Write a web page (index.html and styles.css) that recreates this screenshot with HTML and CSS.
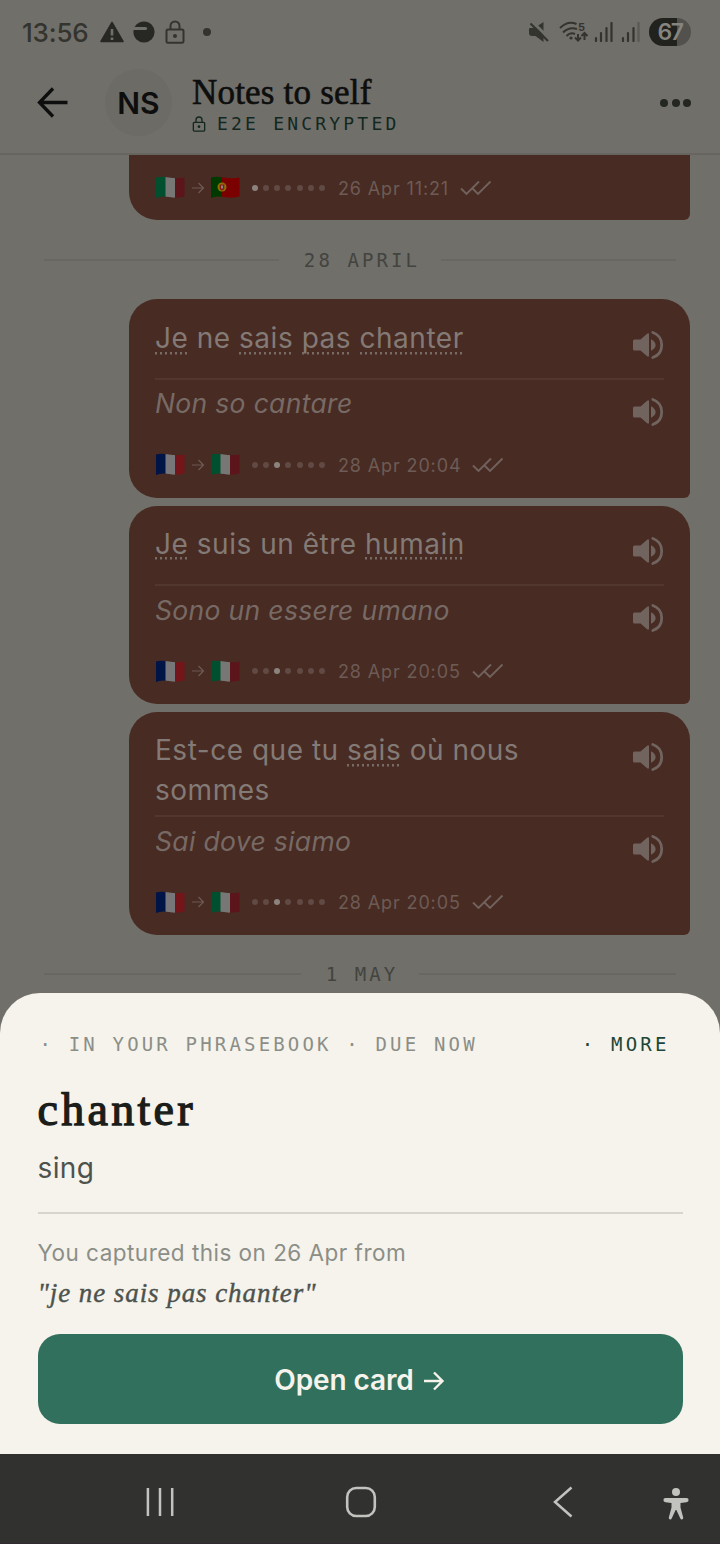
FILE: index.html
```html
<!DOCTYPE html>
<html lang="en">
<head>
<meta charset="utf-8">
<title>Notes to self</title>
<link rel="stylesheet" href="styles.css">
</head>
<body>
<svg class="defs" width="0" height="0">
  <symbol id="speaker" viewBox="0 0 32 32">
    <path d="M2.500 10.500h6L15.100 4.700q1.900-1.200 1.900.7v21.200q0 1.900-1.900.7L8.500 21.500h-6q-1.500 0-1.500-1.500v-8q0-1.500 1.500-1.500z" fill="currentColor"/>
    <path d="M19 10.200q4.600 2.400 4.600 5.800T19 21.800z" fill="currentColor"/>
    <path d="M20.800 3.500C26.700 5.500 29.700 10.500 29.700 16S26.700 26.500 20.800 28.500" fill="none" stroke="currentColor" stroke-width="2.800" stroke-linecap="round"/>
  </symbol>
  <symbol id="checks" viewBox="0 0 32 16">
    <path d="M1 8.500l5.500 5.500L19 1.500M12.500 8.500l5.500 5.500L30.500 1.500" fill="none" stroke="currentColor" stroke-width="1.900"/>
  </symbol>
  <symbol id="arrow" viewBox="0 0 14 14">
    <path d="M1 7h11M7.500 2l5 5-5 5" fill="none" stroke="currentColor" stroke-width="1.200"/>
  </symbol>
  <clipPath id="wave"><path d="M1 1.500Q6 0 14 1.500T29.500 1.500V20.500Q22 22.500 14 21T1 22z"/></clipPath>
  <symbol id="it" viewBox="0 0 30 23"><g clip-path="url(#wave)"><path fill="#00502f" d="M0 0h11v23H0z"/><path fill="#777775" d="M10.500 0H20v23h-9.500z"/><path fill="#5b151b" d="M20 0h10v23H20z"/></g></symbol>
  <symbol id="fr" viewBox="0 0 30 23"><g clip-path="url(#wave)"><path fill="#001448" d="M0 0h11v23H0z"/><path fill="#777779" d="M10.500 0H20v23h-9.500z"/><path fill="#74151a" d="M20 0h10v23H20z"/></g></symbol>
  <symbol id="pt" viewBox="0 0 30 23"><g clip-path="url(#wave)"><path fill="#003a00" d="M0 0h12v23H0z"/><path fill="#7b0000" d="M11.500 0H30v23H11.500z"/></g><circle cx="12" cy="11" r="4.500" fill="#8b7200"/><path d="M9.700 8.500h4.600v3.500q0 2-2.300 2.500-2.300-.5-2.300-2.500z" fill="#881818"/><path d="M11 9.500h2v3h-2z" fill="#888"/></symbol>
  <symbol id="lock" viewBox="0 0 20 24">
    <path d="M3 9.500h14q1.500 0 1.500 1.500v10.500q0 1.200-1.500 1.200H3q-1.500 0-1.500-1.200V11q0-1.500 1.500-1.500zM5.500 9V6a4.500 4.500 0 0 1 9 0v3" fill="none" stroke="currentColor" stroke-width="2"/><circle cx="10" cy="16" r="2" fill="currentColor"/>
  </symbol>
</svg>
<div class="app">
  <div class="status">
    <span class="time">13:56</span>
    <svg class="s-warn" width="24" height="22" viewBox="0 0 24 22"><path d="M12 1.500L23 20.500H1z" fill="#272724" stroke="#272724" stroke-width="1.500" stroke-linejoin="round"/><path d="M12 8v6.500M12 16.500v2.500" stroke="#706f6a" stroke-width="2.600"/></svg>
    <svg class="s-disc" width="22" height="22" viewBox="0 0 22 22"><circle cx="11" cy="11" r="10.600" fill="#272724"/><path d="M0 7.500h12.500" stroke="#706f6a" stroke-width="3.200" stroke-linecap="round"/></svg>
    <svg class="s-lock" width="20" height="24"><use href="#lock"/></svg>
    <i class="s-dot"></i>
    <svg class="s-mute" width="22" height="22" viewBox="0 0 22 22"><path d="M1.500 7h5L15.500 1v20L7.500 15H4q-3 0-3-3V8z" fill="#34342f"/><path d="M3.500 0l20 19.500" stroke="#706f6a" stroke-width="3"/><path d="M2.500 2.500l17.500 17.500" stroke="#34342f" stroke-width="2.200"/></svg>
    <svg class="s-wifi" width="29" height="22" viewBox="0 0 29 22"><g fill="none" stroke="#34342f" stroke-width="2"><path d="M1 7Q9-1 17.500 3M4 11.500Q10 5.500 18 8M7.500 15Q11.500 11 16 13"/><path d="M19 13v6m-3-2.500l3 3 3-3M25.500 19v-6.500m-3 2.500l3-3 3 3"/></g><circle cx="12" cy="17" r="1.600" fill="#34342f"/><text x="19" y="9.500" class="five">5</text></svg>
    <svg class="s-sig" width="19" height="20" viewBox="0 0 19 20"><path d="M2 16v3M7 11v8M12.500 6v13M17.500 1v18" stroke="#34342f" stroke-width="2.200" stroke-linecap="round"/></svg>
    <svg class="s-sig2" width="19" height="20" viewBox="0 0 19 20"><path d="M2 16v3M7 11v8M12.500 6v13" stroke="#34342f" stroke-width="2.200" stroke-linecap="round"/><path d="M17.500 1v18" stroke="#5a5955" stroke-width="2.200" stroke-linecap="round"/></svg>
    <span class="battery">67</span>
  </div>
  <header class="bar">
    <svg class="back" width="32" height="32" viewBox="0 0 32 32"><path d="M30.500 15.500H3M16 1.500L2.500 15.500 16 29.500" fill="none" stroke="#0d0e0d" stroke-width="3.300"/></svg>
    <span class="avatar">NS</span>
    <div class="who">
      <div class="title">Notes to self</div>
      <div class="enc"><svg width="14" height="16"><use href="#lock" width="14" height="16"/></svg><span>E2E ENCRYPTED</span></div>
    </div>
    <span class="more"><i></i><i></i><i></i></span>
  </header>
  <main class="chat">
    <article class="bubble cut">
      <div class="meta"><svg class="flag"><use href="#it"/></svg><svg class="to"><use href="#arrow"/></svg><svg class="flag"><use href="#pt"/></svg><span class="dots"><i class="on"></i><i></i><i></i><i></i><i></i><i></i><i></i></span><time>26 Apr 11:21</time><svg class="checks"><use href="#checks"/></svg></div>
    </article>
    <div class="day first"><span>28 APRIL</span></div>
    <article class="bubble">
      <div class="row src"><p><u>Je</u> ne <u>sais</u> <u>pas</u> <u>chanter</u></p><svg class="spk"><use href="#speaker"/></svg></div>
      <div class="row dst"><p>Non so cantare</p><svg class="spk"><use href="#speaker"/></svg></div>
      <div class="meta"><svg class="flag"><use href="#fr"/></svg><svg class="to"><use href="#arrow"/></svg><svg class="flag"><use href="#it"/></svg><span class="dots"><i></i><i></i><i class="on"></i><i></i><i></i><i></i><i></i></span><time>28 Apr 20:04</time><svg class="checks"><use href="#checks"/></svg></div>
    </article>
    <article class="bubble">
      <div class="row src"><p><u>Je</u> suis un être <u>humain</u></p><svg class="spk"><use href="#speaker"/></svg></div>
      <div class="row dst"><p>Sono un essere umano</p><svg class="spk"><use href="#speaker"/></svg></div>
      <div class="meta"><svg class="flag"><use href="#fr"/></svg><svg class="to"><use href="#arrow"/></svg><svg class="flag"><use href="#it"/></svg><span class="dots"><i></i><i></i><i class="on"></i><i></i><i></i><i></i><i></i></span><time>28 Apr 20:05</time><svg class="checks"><use href="#checks"/></svg></div>
    </article>
    <article class="bubble">
      <div class="row src"><p>Est-ce que tu <u>sais</u> où nous<br>sommes</p><svg class="spk"><use href="#speaker"/></svg></div>
      <div class="row dst"><p>Sai dove siamo</p><svg class="spk"><use href="#speaker"/></svg></div>
      <div class="meta"><svg class="flag"><use href="#fr"/></svg><svg class="to"><use href="#arrow"/></svg><svg class="flag"><use href="#it"/></svg><span class="dots"><i></i><i></i><i class="on"></i><i></i><i></i><i></i><i></i></span><time>28 Apr 20:05</time><svg class="checks"><use href="#checks"/></svg></div>
    </article>
    <div class="day last"><span>1 MAY</span></div>
  </main>
  <section class="sheet">
    <div class="tags"><span>· IN YOUR PHRASEBOOK · DUE NOW</span><span class="act">· MORE</span></div>
    <h2>chanter</h2>
    <div class="gloss">sing</div>
    <div class="captured">You captured this on 26 Apr from</div>
    <div class="quote">"je ne sais pas chanter"</div>
    <div class="open">Open card <svg width="24" height="22" viewBox="0 0 24 22"><path d="M2 12h18M12 3.500l8.500 8.500-8.500 8.500" fill="none" stroke="#f5f3ec" stroke-width="2.400"/></svg></div>
  </section>
  <nav class="nav">
    <svg width="28" height="32" viewBox="0 0 28 32"><path d="M1.900 2v28M14 2v28M26.200 2v28" stroke="#c2c2bf" stroke-width="2.500"/></svg>
    <svg width="32" height="32" viewBox="0 0 32 32"><rect x="2.200" y="2" width="27.600" height="28" rx="9" fill="none" stroke="#c2c2bf" stroke-width="2.600"/></svg>
    <svg width="22" height="32" viewBox="0 0 22 32"><path d="M19.500 1.500L3 16l16.500 14.500" fill="none" stroke="#c2c2bf" stroke-width="2.500"/></svg>
    <svg class="person" width="26" height="34" viewBox="0 0 26 34"><circle cx="13" cy="5" r="4" fill="#c2c2bf"/><path d="M2.500 11h21a2 2 0 0 1 0 4.200l-6 .8v4.500l2.700 10q.3 2-1.500 2-1 0-1.500-1.200L13.400 23h-.8l-3.800 8.300q-.5 1.200-1.500 1.200-1.800 0-1.500-2L8.500 20.500V16l-6-.8a2 2 0 0 1 0-4.200z" fill="#c2c2bf"/></svg>
  </nav>
</div>
</body>
</html>
```
FILE: styles.css
```css
* { box-sizing: border-box; margin: 0; padding: 0; }
body { width: 720px; height: 1544px; overflow: hidden; font-family: Inter, "Liberation Sans", sans-serif; }
svg { display: block; flex: none; }
i { display: block; flex: none; }
.defs { position: absolute; }
.app { position: relative; display: flex; flex-direction: column; width: 720px; height: 1544px; background: #706f6a; overflow: hidden; }

.status { display: flex; align-items: center; height: 64px; padding: 0 29px 0 22px; }
.time { width: 66px; font-size: 26px; font-weight: 500; color: #34342f; white-space: nowrap; letter-spacing: -0.2px; }
.s-warn { margin-left: 12px; }
.s-disc { margin-left: 9px; }
.s-lock { margin-left: 10px; color: #34342f; }
.s-dot { width: 8px; height: 8px; margin-left: 18px; border-radius: 50%; background: #34342f; }
.s-mute { margin-left: auto; }
.s-wifi { margin-left: 9px; }
.s-sig { margin-left: 6px; }
.s-sig2 { margin-left: 8px; }
.five { font: 700 11px Inter, sans-serif; fill: #34342f; }
.battery { width: 42px; height: 28px; margin-left: 9px; border-radius: 14px; background: linear-gradient(90deg, #21211e 28px, #52514d 28px); color: #85847e; font-size: 23px; font-weight: 600; line-height: 29px; text-align: center; letter-spacing: -1.500px; }

.bar { display: flex; align-items: center; height: 91px; padding: 1px 29px 13px 37px; border-bottom: 2px solid #666560; }
.avatar { width: 67px; height: 67px; margin-left: 36px; border-radius: 50%; background: #6c6b65; color: #0d0e0d; font-size: 30px; font-weight: 600; line-height: 68px; text-align: center; }
.who { margin-left: 20px; padding-top: 6px; }
.title { font-family: "Liberation Serif", serif; font-size: 35px; line-height: 36px; color: #0d0e0d; -webkit-text-stroke: 0.6px #0d0e0d; white-space: nowrap; letter-spacing: 0.2px; }
.enc { display: flex; align-items: center; height: 26px; color: #12281f; }
.enc span { margin-left: 11px; font: 18px/26px "DejaVu Sans Mono", monospace; letter-spacing: 3.200px; }
.more { display: flex; gap: 3.500px; margin-left: auto; }
.more i { width: 8px; height: 8px; border-radius: 50%; background: #242622; }

.chat { display: flex; flex-direction: column; align-items: flex-end; height: 1299px; padding-right: 30px; }
.bubble { width: 561.500px; padding: 19px 26px 20px 26.500px; margin-bottom: 8px; border-radius: 28px 28px 6px 28px; background: #482b23; color: #7d726e; }
.cut { height: 65px; padding-top: 20px; margin: 0; border-radius: 0 0 6px 28px; }
.row { display: flex; justify-content: space-between; }
.row p { white-space: nowrap; }
.src { min-height: 59.500px; padding-bottom: 4px; }
.src p { font-size: 28px; line-height: 40px; letter-spacing: 0.520px; color: #837a76; }
.src u { text-decoration: none; background: repeating-linear-gradient(90deg, #776b66 0 2px, transparent 2px 5px) 0 30.500px / 100% 2.500px no-repeat; }
.bubble:not(.cut) ~ .bubble .src { margin-top: -0.6px; margin-bottom: 0.6px; }
.src .spk { margin-top: 11px; }
.dst { height: 74.500px; padding-top: 4.500px; border-top: 2px solid #52372f; }
.dst p { font-size: 26.500px; line-height: 38px; font-style: italic; letter-spacing: 0.330px; color: #776a65; }
.spk { width: 32px; height: 32px; margin-top: 11.500px; color: #71645f; }
.meta { display: flex; align-items: center; height: 25.500px; }
.flag { width: 30px; height: 23px; }
.to { width: 14px; height: 14px; margin: 0 5.500px; color: #6d5b55; }
.dots { display: flex; gap: 5.250px; margin-left: 11.500px; }
.dots i { width: 6px; height: 6px; border-radius: 50%; background: #614a43; }
.dots .on { background: #8c837f; }
.meta time { margin-left: 13px; padding-top: 1px; font-size: 18px; letter-spacing: 0.870px; color: #6d5b55; white-space: nowrap; }
.checks { width: 32px; height: 16px; margin-left: 11px; color: #71625d; }

.day { display: flex; align-items: center; width: 632px; margin-right: 14px; color: #43443f; font: 19px/24px "DejaVu Sans Mono", monospace; letter-spacing: 3.100px; white-space: nowrap; }
.day::before, .day::after { content: ""; flex: 1; height: 2px; background: #686762; }
.day span { margin: 0 21px 0 25px; }
.first { height: 79px; }
.last { height: 62px; }

.sheet { position: absolute; left: 0; right: 0; bottom: 90px; height: 461.500px; padding: 39px 37.500px 0; border-radius: 40px 40px 0 0; background: #f5f3ec; }
.tags { display: flex; justify-content: space-between; padding: 0 13px 0 2px; font: 19px/24px "DejaVu Sans Mono", monospace; letter-spacing: 3.170px; color: #8b8e87; white-space: nowrap; }
.act { color: #1c4637; }
.sheet h2 { margin-top: 26px; font: 400 46px/56px "Liberation Serif", serif; -webkit-text-stroke: 1.300px #1a1d1a; color: #1a1d1a; letter-spacing: 3.300px; }
.gloss { height: 76.500px; padding-top: 10px; font-size: 28px; line-height: 40px; letter-spacing: 0.4px; color: #4d524d; border-bottom: 2px solid #d5d4ce; }
.captured { margin-top: 21px; font-size: 22.500px; line-height: 36px; letter-spacing: 0.480px; color: #8b8e87; }
.quote { margin-top: 3px; font: italic 27px/38px "Liberation Serif", serif; -webkit-text-stroke: 0.4px #4d524d; letter-spacing: 0.930px; color: #4d524d; }
.open { display: flex; align-items: center; justify-content: center; gap: 8px; height: 90px; padding-top: 2px; margin-top: 22px; border-radius: 22px; background: #30705c; color: #f5f3ec; font-size: 28px; font-weight: 600; letter-spacing: -0.1px; }

.nav { display: grid; grid-template-columns: 201px 201px 203px 24px; align-items: center; justify-items: center; height: 90px; flex: none; padding: 6px 0 0 59px; background: #31312f; border-bottom: 1px solid #302a31; }
.person { margin-top: 4px; }
```
